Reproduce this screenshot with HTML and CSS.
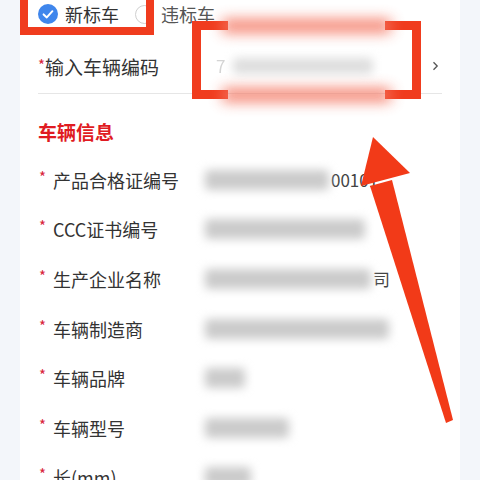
FILE: index.html
```html
<!DOCTYPE html>
<html lang="zh">
<head>
<meta charset="utf-8">
<link rel="stylesheet" href="styles.css">
</head>
<body>
<div class="page">
  <div class="card">
    <div class="radio-row">
      <div class="radio checked">
        <svg class="radio-icon" width="20" height="20" viewBox="0 0 20 20"><circle cx="10" cy="10" r="10" fill="#3f86ec"/><path d="M5.6 10.4 L8.8 13.4 L14.4 7.2" fill="none" stroke="#fff" stroke-width="2" stroke-linecap="round" stroke-linejoin="round"/></svg>
        <span class="radio-text">新标车</span>
      </div>
      <div class="radio">
        <span class="radio-empty"></span>
        <span class="radio-text muted">违标车</span>
      </div>
    </div>

    <div class="input-row">
      <div class="input-label"><span class="sup-star">*</span>输入车辆编码</div>
      <div class="input-value">
        <span class="ghost">7</span>
        <span class="blur light" style="width:140px"></span>
      </div>
      <svg class="chev" width="7" height="10" viewBox="0 0 7 10"><path d="M1.5 1.2 L5.2 5 L1.5 8.8" fill="none" stroke="#555" stroke-width="1.3"/></svg>
    </div>

    <div class="section-title">车辆信息</div>

    <div class="rows">
      <div class="row"><span class="star">*</span><span class="label">产品合格证编号</span><span class="value"><span class="blur" style="width:124px"></span><span class="vtext">00101</span></span></div>
      <div class="row"><span class="star">*</span><span class="label">CCC证书编号</span><span class="value"><span class="blur" style="width:160px"></span></span></div>
      <div class="row"><span class="star">*</span><span class="label">生产企业名称</span><span class="value"><span class="blur" style="width:166px"></span><span class="vtext">司</span></span></div>
      <div class="row"><span class="star">*</span><span class="label">车辆制造商</span><span class="value"><span class="blur" style="width:184px"></span></span></div>
      <div class="row"><span class="star">*</span><span class="label">车辆品牌</span><span class="value"><span class="blur" style="width:40px"></span></span></div>
      <div class="row"><span class="star">*</span><span class="label">车辆型号</span><span class="value"><span class="blur" style="width:84px"></span></span></div>
      <div class="row"><span class="star">*</span><span class="label">长(mm)</span><span class="value"><span class="blur" style="width:46px"></span></span></div>
    </div>
  </div>
</div>

<div class="annot">
  <div class="box1"></div>
  <div class="box2">
    <div class="b2-left"></div>
    <div class="b2-right"></div>
    <div class="b2-top-a"></div>
    <div class="b2-top-b"></div>
    <div class="b2-top-mid"></div>
    <div class="b2-bot-a"></div>
    <div class="b2-bot-b"></div>
    <div class="b2-bot-mid"></div>
  </div>
  <svg class="arrow" width="480" height="480" viewBox="0 0 480 480">
    <polygon points="370,186 392,180 453,420 446,423" fill="#f23a18"/>
    <polygon points="373,137 410,173 361,186" fill="#f23a18"/>
  </svg>
</div>
</body>
</html>
```

FILE: styles.css
```css
html, body {
  margin: 0;
  padding: 0;
  width: 480px;
  height: 480px;
  overflow: hidden;
  background: #f3f6fa;
  font-family: "Noto Sans CJK SC", "Noto Sans", sans-serif;
  color: #333;
}

.page {
  padding: 0 20px;
}

.card {
  background: #fff;
  padding: 0 18px;
  height: 480px;
}

.radio-row {
  display: flex;
  align-items: center;
  height: 28px;
  gap: 16px;
}

.radio {
  display: flex;
  align-items: center;
  gap: 7px;
}

.radio-text {
  font-size: 18px;
  line-height: 24px;
  color: #333;
}

.radio-text.muted {
  color: #555;
}

.radio-empty {
  width: 19px;
  height: 19px;
  border: 1px solid #cfcfcf;
  border-radius: 50%;
  box-sizing: border-box;
}

.input-row {
  margin-top: 10px;
  height: 55px;
  border-bottom: 1px solid #e6e6e6;
  display: flex;
  align-items: center;
}

.input-label {
  width: 174px;
  font-size: 19px;
  line-height: 26px;
  color: #333;
  flex-shrink: 0;
}

.sup-star {
  color: #d8233a;
  font-size: 15px;
  vertical-align: 4px;
}

.input-value {
  flex: 1;
  display: flex;
  align-items: center;
  gap: 8px;
  padding-left: 4px;
}

.ghost {
  color: #d4d4d4;
  font-size: 17px;
  line-height: 24px;
  filter: blur(0.6px);
}

.chev {
  margin-right: 3px;
}

.section-title {
  margin-top: 25px;
  font-size: 19px;
  line-height: 26px;
  font-weight: bold;
  color: #e01b22;
}

.rows {
  margin-top: 10px;
}

.row {
  height: 49.6px;
  display: flex;
  align-items: center;
}

.star {
  width: 14px;
  padding-left: 1px;
  color: #d8233a;
  font-size: 15px;
  line-height: 20px;
  margin-top: -6px;
  flex-shrink: 0;
}

.label {
  width: 152px;
  font-size: 18px;
  line-height: 26px;
  color: #333;
  flex-shrink: 0;
}

.value {
  display: flex;
  align-items: center;
  gap: 2px;
}

.blur {
  display: inline-block;
  height: 20px;
  background: #cbcbcb;
  filter: blur(5px);
  border-radius: 4px;
}

.blur.light {
  background: #dedede;
  height: 16px;
}

.vtext {
  font-size: 17px;
  line-height: 24px;
  color: #444;
}

/* annotation overlay */
.annot {
  position: absolute;
  left: 0;
  top: 0;
  width: 480px;
  height: 480px;
  pointer-events: none;
}

.box1 {
  position: absolute;
  left: 20px;
  top: -20px;
  width: 134px;
  height: 55px;
  border: 8px solid #f03c1e;
  box-sizing: border-box;
}

.box2 {
  position: absolute;
  left: 192px;
  top: 21px;
  width: 229px;
  height: 78px;
}

.box2 > div {
  position: absolute;
  background: #f03c1e;
}

.b2-left { left: 0; top: 0; width: 9px; height: 78px; }
.b2-right { right: 0; top: 0; width: 9px; height: 78px; }
.b2-top-a { left: 0; top: 0; width: 36px; height: 9px; }
.b2-top-b { right: 0; top: 0; width: 36px; height: 9px; }
.b2-bot-a { left: 0; bottom: 0; width: 36px; height: 9px; }
.b2-bot-b { right: 0; bottom: 0; width: 36px; height: 9px; }

.box2 > .b2-top-mid,
.box2 > .b2-bot-mid {
  left: 30px;
  width: 169px;
  height: 14px;
  background: #f47a66;
  filter: blur(7px);
  opacity: 0.9;
}

.box2 > .b2-top-mid { top: -2px; }
.box2 > .b2-bot-mid { bottom: -3px; }

.arrow {
  position: absolute;
  left: 0;
  top: 0;
}
```
